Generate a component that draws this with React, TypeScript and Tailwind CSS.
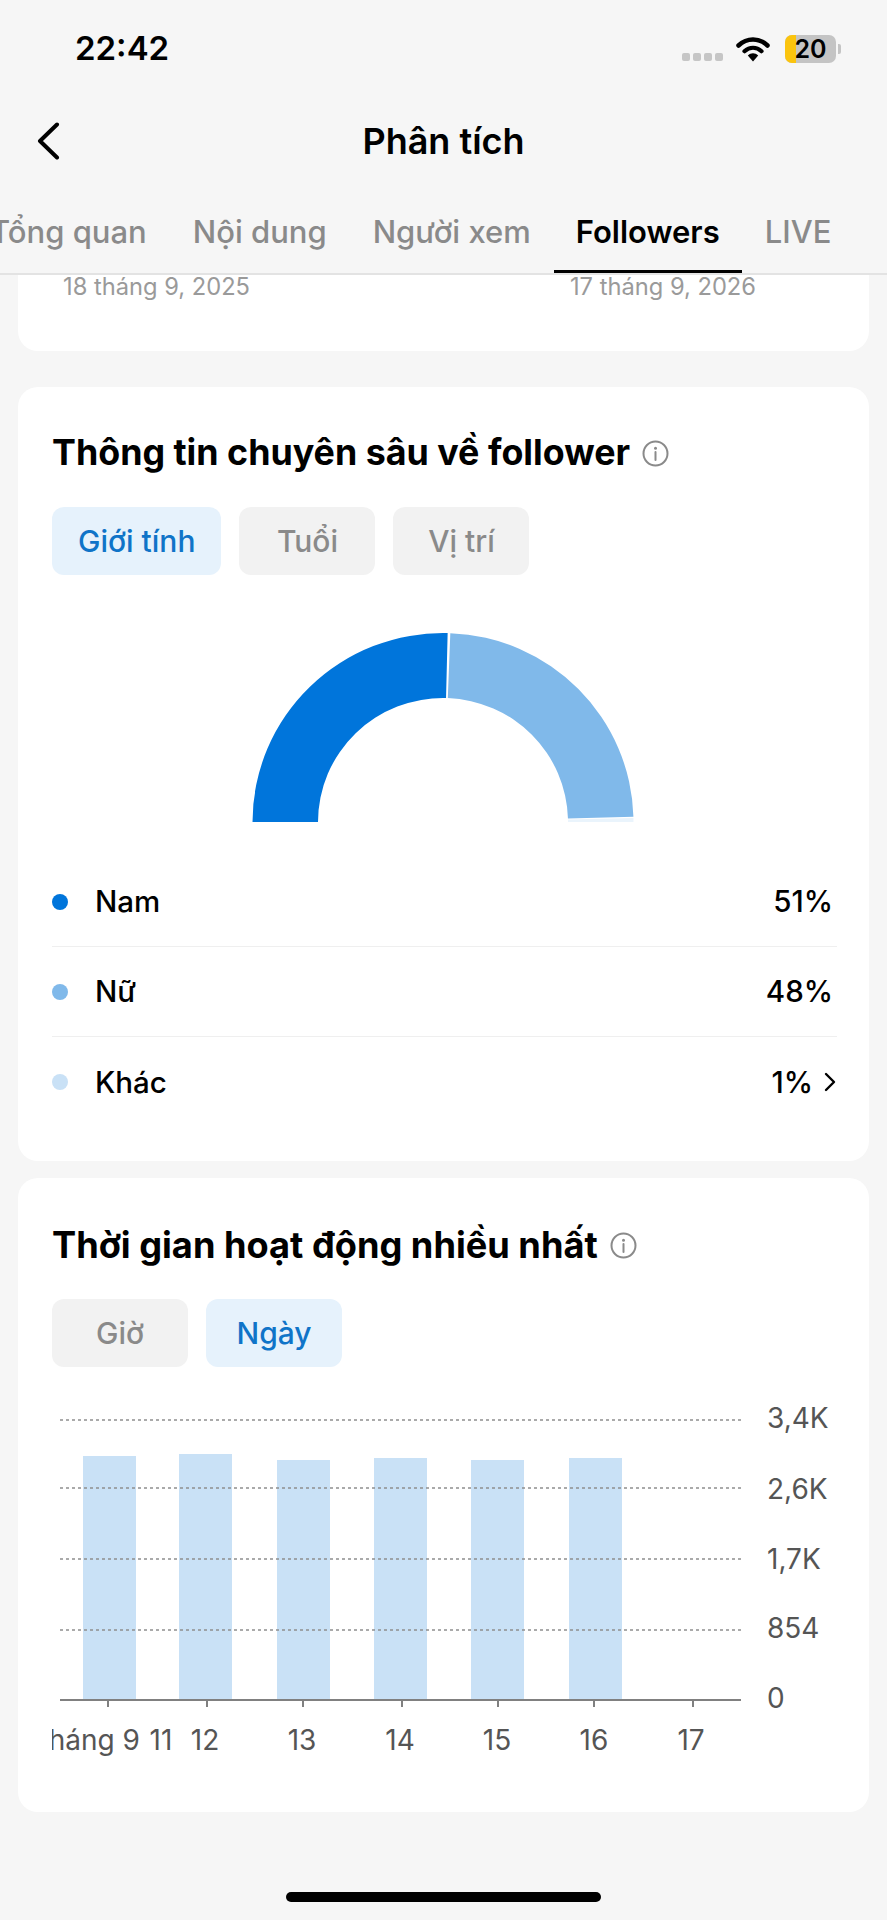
const font = "font-['Inter','Noto_Sans',sans-serif]";

const tabs = ["Tổng quan", "Nội dung", "Người xem", "Followers", "LIVE"];

const legend = [
  { label: "Nam", value: "51%", dot: "bg-[#0075db]" },
  { label: "Nữ", value: "48%", dot: "bg-[#80b9ea]" },
  { label: "Khác", value: "1%", dot: "bg-[#c9e1f6]" },
];

const bars = [
  { x: 83, top: 1456 },
  { x: 179, top: 1454 },
  { x: 277, top: 1460 },
  { x: 374, top: 1458 },
  { x: 471, top: 1460 },
  { x: 569, top: 1458 },
];

const gridLines = [1420, 1488, 1559, 1630];
const ticks = [108, 207, 303, 402, 498, 594, 693];
const yLabels = [
  { text: "3,4K", y: 1418 },
  { text: "2,6K", y: 1489 },
  { text: "1,7K", y: 1559 },
  { text: "854", y: 1628 },
  { text: "0", y: 1698 },
];
const xLabels = [
  { text: "12", x: 205 },
  { text: "13", x: 302 },
  { text: "14", x: 400 },
  { text: "15", x: 497 },
  { text: "16", x: 594 },
  { text: "17", x: 691 },
];

// one slice of the half donut, angles in degrees from the right end
function arc(from: number, to: number) {
  const cx = 191;
  const cy = 190.5;
  const R = 190.5;
  const r = 125;
  const p = (rad: number, a: number) => {
    const t = (a * Math.PI) / 180;
    return `${(cx + rad * Math.cos(t)).toFixed(2)} ${(cy - rad * Math.sin(t)).toFixed(2)}`;
  };
  return `M${p(R, from)} A${R} ${R} 0 0 1 ${p(R, to)} L${p(r, to)} A${r} ${r} 0 0 0 ${p(r, from)} Z`;
}

function InfoIcon() {
  return (
    <svg width="27" height="27" viewBox="0 0 27 27" fill="none" className="shrink-0">
      <circle cx="13.5" cy="13.5" r="12" stroke="#8a8a8a" strokeWidth="2" />
      <circle cx="13.5" cy="8.2" r="1.5" fill="#8a8a8a" />
      <path d="M13.5 12v8" stroke="#8a8a8a" strokeWidth="2" strokeLinecap="round" />
    </svg>
  );
}

function Pill({ text, active }: { text: string; active?: boolean }) {
  return (
    <div
      className={
        active
          ? "h-[68px] min-w-[136px] px-[26px] rounded-[12px] flex items-center justify-center bg-[#e6f2fc] text-[#0f74c8] text-[30px] font-medium"
          : "h-[68px] min-w-[136px] px-[26px] rounded-[12px] flex items-center justify-center bg-[#f2f2f2] text-[#8a8a8a] text-[30px] font-medium"
      }
    >
      {text}
    </div>
  );
}

function StatusBar() {
  return (
    <div className="h-[98px] flex items-center justify-between pl-[75px] pr-[46px]">
      <div className="text-[33px] font-semibold text-black">22:42</div>
      <div className="flex items-center">
        <div className="flex gap-[3px] mt-[16px] mr-[13px]">
          <div className="w-[8px] h-[8px] rounded-[2px] bg-[#c6c6c6]" />
          <div className="w-[8px] h-[8px] rounded-[2px] bg-[#c6c6c6]" />
          <div className="w-[8px] h-[8px] rounded-[2px] bg-[#c6c6c6]" />
          <div className="w-[8px] h-[8px] rounded-[2px] bg-[#c6c6c6]" />
        </div>
        <svg width="34" height="26" viewBox="0 0 34 26" fill="none" className="mr-[15px]">
          <path d="M2.5 9.5C11 1.5 23 1.5 31.5 9.5" stroke="#000" strokeWidth="4.5" strokeLinecap="round" />
          <path d="M8.5 15.2C13.5 10.6 20.5 10.6 25.5 15.2" stroke="#000" strokeWidth="4.2" strokeLinecap="round" />
          <path d="M11.8 19.6C15 16.4 19 16.4 22.2 19.6L17 25.5Z" fill="#000" />
        </svg>
        <div className="relative w-[51px] h-[28px] rounded-[7px] bg-[#c4c4c4] overflow-hidden flex items-center justify-center">
          <div className="absolute left-0 top-0 bottom-0 w-[11px] bg-[#fbc40e]" />
          <span className="relative text-[25px] leading-none font-semibold text-black">20</span>
        </div>
        <div className="w-[3px] h-[10px] ml-[2px] rounded-r-[2px] bg-[#c4c4c4]" />
      </div>
    </div>
  );
}

function NavBar() {
  return (
    <div className="h-[86px] grid grid-cols-[1fr_auto_1fr] items-center">
      <svg width="24" height="38" viewBox="0 0 24 38" fill="none" className="ml-[36px]">
        <path d="M21 2.5L4 19L21 35.5" stroke="#000" strokeWidth="4" strokeLinecap="round" strokeLinejoin="round" />
      </svg>
      <div className="text-[36px] font-semibold text-black">Phân tích</div>
      <div />
    </div>
  );
}

function Tabs() {
  return (
    <div className="h-[91px] border-b-2 border-[#e3e3e3] overflow-hidden">
      <div className="flex ml-[-33px] h-full">
        {tabs.map((t) => (
          <div
            key={t}
            className={
              t === "Followers"
                ? "px-[22px] pt-[28px] h-[91px] border-b-[5px] border-black text-[31px] leading-[40px] font-semibold text-black whitespace-nowrap"
                : "px-[23px] pt-[28px] h-[91px] text-[31px] leading-[40px] font-medium text-[#8a8a8a] whitespace-nowrap"
            }
          >
            {t}
          </div>
        ))}
      </div>
    </div>
  );
}

function GenderCard() {
  return (
    <div className="mt-[36px] bg-white rounded-[20px] pl-[34px] pr-[32px] pt-[46px] pb-[34px]">
      <div className="flex items-center gap-[12px] h-[40px]">
        <h2 className="text-[35.8px] font-bold text-black whitespace-nowrap">Thông tin chuyên sâu về follower</h2>
        <InfoIcon />
      </div>
      <div className="flex gap-[18px] mt-[34px]">
        <Pill text="Giới tính" active />
        <Pill text="Tuổi" />
        <Pill text="Vị trí" />
      </div>
      <svg
        width="382"
        height="189"
        viewBox="0 0 382 190.5"
        preserveAspectRatio="none"
        className="ml-[200px] mt-[58px]"
      >
        <path d={arc(180, 88.6)} fill="#0075db" />
        <path d={arc(87.8, 1.6)} fill="#80b9ea" />
        <path d={arc(1.2, 0)} fill="#eaf4fc" />
      </svg>
      <div className="mt-[35px]">
        {legend.map((row, i) => (
          <div
            key={row.label}
            className={
              i < 2
                ? "h-[90px] flex items-center border-b border-[#efefef]"
                : "h-[90px] flex items-center"
            }
          >
            <div className={`w-[16px] h-[16px] rounded-full ${row.dot}`} />
            <div className="ml-[27px] text-[29.5px] font-medium text-black">{row.label}</div>
            <div className="ml-auto flex items-center text-[29.5px] font-medium text-black">
              {row.value}
              {i === 2 ? (
                <svg width="14" height="20" viewBox="0 0 14 20" fill="none" className="ml-[10px]">
                  <path d="M3 2l8 8-8 8" stroke="#000" strokeWidth="2.4" strokeLinecap="round" strokeLinejoin="round" />
                </svg>
              ) : (
                <div className="w-[4px]" />
              )}
            </div>
          </div>
        ))}
      </div>
    </div>
  );
}

function ActivityCard() {
  return (
    <div className="mt-[17px] bg-white rounded-[20px] pl-[34px] pr-[32px] pt-[47px] pb-[47px]">
      <div className="flex items-center gap-[12px] h-[40px]">
        <h2 className="text-[36.2px] font-bold text-black whitespace-nowrap">Thời gian hoạt động nhiều nhất</h2>
        <InfoIcon />
      </div>
      <div className="flex gap-[18px] mt-[34px]">
        <Pill text="Giờ" />
        <Pill text="Ngày" active />
      </div>
      <svg width="784" height="365" viewBox="52 1400 784 365" className="mt-[33px] block">
        {bars.map((b) => (
          <rect key={b.x} x={b.x} y={b.top} width="53" height={1700 - b.top} fill="#c9e1f6" />
        ))}
        {gridLines.map((y) => (
          <line key={y} x1="60" x2="741" y1={y} y2={y} stroke="#8f8f8f" strokeWidth="1.5" strokeDasharray="3 3" />
        ))}
        <line x1="60" x2="741" y1="1700" y2="1700" stroke="#808080" strokeWidth="2" />
        {ticks.map((x) => (
          <line key={x} x1={x} x2={x} y1="1700" y2="1707" stroke="#808080" strokeWidth="2" />
        ))}
        {yLabels.map((l) => (
          <text key={l.text} x="767" y={l.y + 10} fontSize="28" fill="#555555">
            {l.text}
          </text>
        ))}
        <text x="140" y="1750" fontSize="28" fill="#555555" textAnchor="end">
          tháng 9
        </text>
        <text x="161" y="1750" fontSize="28" fill="#555555" textAnchor="middle">
          11
        </text>
        {xLabels.map((l) => (
          <text key={l.text} x={l.x} y="1750" fontSize="28" fill="#555555" textAnchor="middle">
            {l.text}
          </text>
        ))}
      </svg>
    </div>
  );
}

export default function App() {
  return (
    <div className={`relative w-[887px] h-[1920px] overflow-hidden bg-[#f6f6f6] ${font}`}>
      <StatusBar />
      <NavBar />
      <Tabs />
      <div className="px-[18px]">
        <div className="h-[76px] bg-white rounded-b-[20px] flex justify-between pl-[45px] pr-[113px] text-[23.7px] leading-[24px] text-[#9a9a9a]">
          <span>18 tháng 9, 2025</span>
          <span>17 tháng 9, 2026</span>
        </div>
        <GenderCard />
        <ActivityCard />
      </div>
      <div className="absolute left-[286px] top-[1892px] w-[315px] h-[10px] rounded-full bg-black" />
    </div>
  );
}
